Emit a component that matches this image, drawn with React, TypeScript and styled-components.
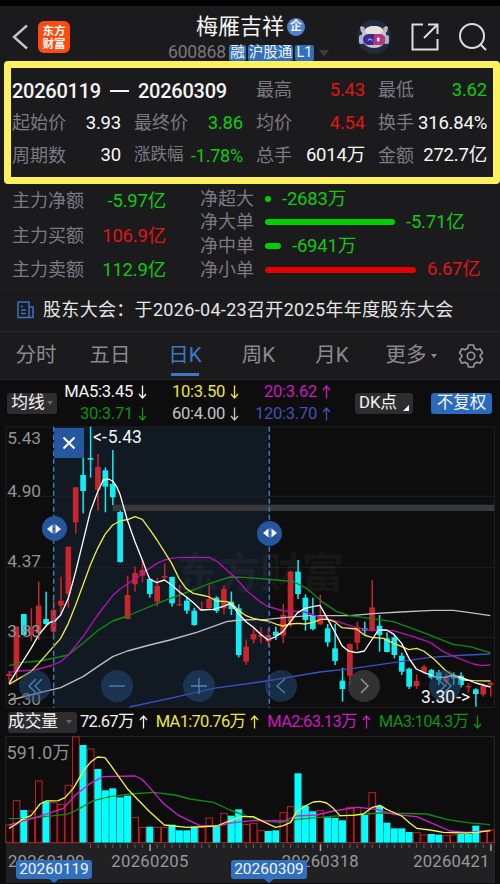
import React from "react";
import styled, { createGlobalStyle } from "styled-components";

const UP = "#e01515";
const DOWN = "#12c812";
const CYAN = "#00ffff";
const RED = "#c9252d";

const Global = createGlobalStyle`
  * { box-sizing: border-box; }
  body { margin: 0; background: #0d0d0d; }
`;

const Screen = styled.div`
  width: 500px;
  height: 884px;
  overflow: hidden;
  display: flex;
  flex-direction: column;
  background: #1b1b1d;
  border-top: 6px solid #000;
  font-family: Roboto, "Noto Sans CJK SC", sans-serif;
  font-size: 18px;
  line-height: 1;
  white-space: nowrap;
  color: #f4f4f4;
`;

/* ---------- header ---------- */
const Header = styled.header`
  height: 55px;
  flex: none;
  display: grid;
  grid-template-columns: 158px 184px 158px;
`;
const HeaderLeft = styled.div`
  display: flex;
  align-items: center;
  padding: 7px 0 0 12px;
  gap: 10px;
`;
const Brand = styled.div`
  width: 32px;
  height: 32px;
  border-radius: 6px;
  background: #fb4b10;
  display: grid;
  place-content: center;
  font: 700 11.5px/13.5px "Noto Sans CJK SC", sans-serif;
  color: #fff;
  text-align: center;
`;
const Titles = styled.div`
  display: flex;
  flex-direction: column;
`;
const Name = styled.div`
  display: flex;
  align-items: center;
  gap: 3px;
  height: 31px;
  padding: 10px 0 0 38px;
  font-size: 22px;
`;
const Seal = styled.span`
  width: 18px;
  height: 18px;
  border-radius: 50%;
  background: #5080d0;
  font-size: 12px;
  font-weight: 700;
  line-height: 17px;
  text-align: center;
`;
const Codes = styled.div`
  display: flex;
  align-items: center;
  height: 24px;
  padding: 8px 0 0 10px;
`;
const Code = styled.span`
  width: 61px;
  font-size: 17.5px;
  color: #77777d;
  letter-spacing: -0.2px;
`;
const Tag = styled.span<{ $w: number }>`
  width: ${(p) => p.$w}px;
  height: 16px;
  margin-right: 2px;
  border-radius: 2px;
  background: #2f6fbd;
  font-size: 14.5px;
  line-height: 15px;
  text-align: center;
`;
const Caret = styled.i<{ $s?: number; $c?: string }>`
  width: 0;
  height: 0;
  border: ${(p) => p.$s ?? 4}px solid transparent;
  border-top: ${(p) => (p.$s ?? 4) * 1.4}px solid ${(p) => p.$c ?? "#66666a"};
  border-bottom: 0;
`;
const CodeCaret = styled(Caret)`
  margin-left: 3px;
`;
const HeaderRight = styled.div`
  display: flex;
  align-items: center;
  gap: 19px;
  padding: 7px 0 0 14px;
`;

/* ---------- range summary ---------- */
const Summary = styled.section`
  margin-left: 4px;
  height: 123px;
  flex: none;
  border: 7px solid #fdf15e;
  border-radius: 4px;
  padding: 6px 6px 0 1px;
  display: grid;
  grid-template-columns: repeat(4, 109px);
  column-gap: 13px;
  grid-auto-rows: 32.7px;
`;
const Cell = styled.div<{ $narrow?: boolean }>`
  display: flex;
  justify-content: space-between;
  align-items: center;
  font-size: ${(p) => (p.$narrow ? 16.5 : 18)}px;
`;
const Period = styled.div`
  grid-column: span 2;
  display: flex;
  align-items: center;
  gap: 9px;
  padding-top: 1px;
  font-size: 20px;
  font-weight: 500;
  letter-spacing: -0.25px;
`;
const Dash = styled.i`
  width: 19px;
  height: 2px;
  background: #f4f4f4;
`;
const Label = styled.span`
  color: #7b7984;
`;
const Value = styled.span<{ $c?: string; $s?: number }>`
  color: ${(p) => p.$c ?? "#f8f8f8"};
  font-size: ${(p) => p.$s ?? 18.5}px;
  letter-spacing: -0.2px;
`;

/* ---------- money flow ---------- */
const Flow = styled.section`
  height: 106px;
  flex: none;
  display: grid;
  grid-template-columns: 154px 1fr;
  column-gap: 34px;
  padding: 0 12px;
  border-bottom: 1px solid #222225;
`;
const Mains = styled.div`
  display: grid;
  grid-auto-rows: 34.5px;
  align-content: start;
`;
const Orders = styled.div`
  display: grid;
  grid-auto-rows: 23.6px;
  align-content: start;
  padding-top: 3px;
`;
const Order = styled.div`
  display: flex;
  align-items: center;
`;
const Bar = styled.i<{ $w: number; $c: string }>`
  width: ${(p) => p.$w}px;
  height: 6px;
  border-radius: 3px;
  margin: 0 11px;
  background: ${(p) => p.$c};
`;

const News = styled.section`
  height: 41px;
  flex: none;
  display: flex;
  align-items: center;
  gap: 9px;
  padding: 0 0 1px 17px;
  font-size: 18px;
  color: #e6e6e8;
  letter-spacing: 0.32px;
`;

const Tabs = styled.nav`
  height: 49px;
  flex: none;
  display: grid;
  grid-template-columns: 72px 76px 74px 73px 74px 84px 36px;
  border-top: 1px solid #252527;
  border-bottom: 1px solid #252527;
`;
const Tab = styled.div<{ $on?: boolean }>`
  display: flex;
  align-items: center;
  justify-content: center;
  gap: 4px;
  font-size: 20.5px;
  color: ${(p) => (p.$on ? "#3c78c8" : "#8a8a8e")};
  background: ${(p) => (p.$on ? "linear-gradient(#3c78c8,#3c78c8) 50% 41px / 28px 3px no-repeat" : "none")};
`;

/* ---------- averages ---------- */
const Averages = styled.section`
  height: 46px;
  flex: none;
  display: flex;
  align-items: center;
  background: #0d0d0d;
  padding: 0 8px 0 7px;
`;
const Chip = styled.div<{ $w: number; $blue?: boolean }>`
  width: ${(p) => p.$w}px;
  height: 21px;
  flex: none;
  border-radius: 3px;
  background: ${(p) => (p.$blue ? "#2a6abb" : "#2d2d2f")};
  display: flex;
  align-items: center;
  justify-content: center;
  gap: 2px;
  font-size: ${(p) => (p.$blue ? 16.5 : 16.7)}px;
`;
const Corner = styled.i`
  align-self: flex-end;
  margin: 0 0 3px 4px;
  border-left: 6px solid transparent;
  border-bottom: 6px solid #fff;
`;
const AverageGrid = styled.div`
  width: 274px;
  display: grid;
  grid-template-columns: 90px 92px 92px;
  grid-auto-rows: 22px;
  margin-right: 24px;
`;
const Reading = styled.div<{ $c: string }>`
  display: flex;
  align-items: center;
  justify-content: flex-end;
  gap: 5px;
  color: ${(p) => p.$c};
  font-size: 16.6px;
  letter-spacing: -0.3px;
`;
const Spacer = styled.i`
  flex: 1;
`;

/* ---------- charts ---------- */
const ChartBox = styled.section<{ $h: number }>`
  position: relative;
  height: ${(p) => p.$h}px;
  flex: none;
  background: #0d0d0d;
  svg { display: block; }
`;
const Round = styled.button<{ $x: number; $y: number; $d: number; $bg: string }>`
  position: absolute;
  left: ${(p) => p.$x - p.$d / 2}px;
  top: ${(p) => p.$y - p.$d / 2}px;
  width: ${(p) => p.$d}px;
  height: ${(p) => p.$d}px;
  border: 0;
  padding: 0;
  border-radius: 50%;
  background: ${(p) => p.$bg};
  display: grid;
  place-items: center;
`;
const Extreme = styled.div<{ $x: number; $y: number }>`
  position: absolute;
  left: ${(p) => p.$x}px;
  top: ${(p) => p.$y}px;
  display: flex;
  align-items: center;
  gap: 1px;
  font-size: 17.5px;
  line-height: 18px;
`;
const Close = styled.button`
  position: absolute;
  left: 54px;
  top: 2px;
  width: 30px;
  height: 30px;
  border: 0;
  padding: 0;
  background: #2657a0;
  display: grid;
  place-items: center;
`;
const VolumeBar = styled.section`
  height: 28px;
  flex: none;
  display: flex;
  align-items: center;
  background: #0d0d0d;
  padding: 0 0 0 8px;
`;
const VolumeReading = styled(Reading)`
  margin-left: 3px;
  margin-right: 5px;
  font-size: 16.5px;
  letter-spacing: -0.7px;
`;
const Flag = styled.div<{ $x: number }>`
  position: absolute;
  left: ${(p) => p.$x}px;
  top: 124px;
  width: 76px;
  height: 19px;
  border-radius: 3px;
  background: #2f70c0;
  font-size: 15.5px;
  line-height: 19px;
  text-align: center;
  &::after {
    content: "";
    position: absolute;
    left: 33px;
    top: 19px;
    border: 5px solid transparent;
    border-top: 4px solid #2f70c0;
    border-bottom: 0;
  }
`;

/* Candle: direction, high, body top, body bottom, low, in thirds of a pixel */
type Candle = [0 | 1, number, number, number, number];
const candles: Candle[] = [
  [1, 738, 747, 753, 768], [1, 605, 605, 738, 765], [0, 567, 567, 630, 630], [1, 550, 608, 625, 648],
  [1, 470, 542, 625, 645], [0, 500, 582, 597, 605], [1, 520, 555, 620, 630], [1, 455, 527, 542, 570],
  [1, 365, 365, 507, 548], [1, 187, 187, 292, 325], [0, 65, 150, 198, 265], [0, 5, 99, 104, 158],
  [1, 87, 126, 195, 257], [0, 127, 136, 185, 262], [0, 75, 177, 217, 240], [0, 258, 261, 411, 413],
  [1, 452, 510, 582, 582], [1, 425, 444, 478, 500], [1, 405, 435, 452, 472], [0, 460, 462, 507, 518],
  [1, 458, 483, 530, 545], [1, 415, 453, 458, 462], [0, 455, 456, 535, 545], [1, 480, 537, 541, 543],
  [0, 515, 527, 557, 567], [0, 548, 557, 600, 602], [1, 530, 552, 556, 558], [1, 480, 522, 550, 552],
  [0, 514, 518, 558, 564], [1, 482, 492, 550, 568], [0, 500, 530, 552, 570], [0, 538, 550, 690, 697],
  [1, 643, 665, 710, 720], [1, 605, 627, 643, 655], [1, 607, 630, 635, 655], [1, 610, 630, 650, 665],
  [0, 605, 620, 632, 645], [1, 537, 570, 632, 655], [1, 438, 440, 590, 607], [0, 405, 440, 507, 522],
  [0, 508, 518, 585, 617], [0, 518, 573, 612, 616], [1, 510, 572, 598, 600], [0, 597, 610, 652, 665],
  [0, 597, 670, 708, 720], [0, 728, 767, 792, 830], [1, 655, 657, 752, 780], [1, 590, 607, 653, 675],
  [0, 590, 610, 617, 628], [1, 466, 547, 618, 620], [0, 570, 602, 630, 680], [0, 622, 640, 681, 682],
  [0, 630, 637, 690, 700], [0, 683, 692, 740, 750], [0, 728, 731, 785, 792], [1, 748, 768, 783, 792],
  [1, 720, 725, 742, 746], [0, 732, 735, 758, 763], [0, 735, 742, 765, 780], [1, 745, 755, 770, 785],
  [0, 742, 753, 760, 780], [0, 742, 752, 780, 787], [1, 775, 783, 787, 803], [0, 790, 793, 807, 845],
  [1, 775, 783, 808, 815], [1, 770, 774, 779, 815],
];
/* Volume: direction, top of the bar */
const volumes: [0 | 1, number][] = [
  [1, 375], [1, 302], [0, 330], [1, 333], [1, 243], [0, 305], [1, 308], [1, 313], [1, 256], [1, 111],
  [0, 135], [1, 147], [0, 207], [0, 271], [0, 265], [0, 292], [0, 287], [1, 352], [1, 382], [0, 380],
  [1, 382], [1, 382], [0, 374], [0, 391], [0, 391], [0, 380], [1, 382], [1, 354], [0, 378], [1, 340],
  [0, 347], [0, 328], [1, 373], [1, 370], [1, 392], [0, 393], [0, 391], [1, 338], [1, 320], [0, 220],
  [0, 317], [0, 334], [1, 332], [0, 352], [0, 354], [0, 361], [1, 322], [1, 322], [0, 345], [1, 278],
  [0, 318], [0, 368], [0, 385], [0, 385], [0, 396], [1, 398], [1, 405], [0, 402], [0, 404], [1, 407],
  [1, 405], [0, 402], [0, 402], [0, 377], [1, 392], [1, 390],
];
const cx = (i: number) => 27 + i * 22.23;

const priceLines: [string, string][] = [
  ["#3f4fc8", "388,846 510,820 640,790 800,768 960,741 1060,730 1180,713 1290,697 1400,690 1471,687"],
  ["#bfbfc4", "27,827 90,810 182,788 249,755 293,725 338,695 382,678 449,660 510,645 590,622 680,590 720,585 800,583 860,577 930,572 1050,572 1120,566 1200,561 1300,556 1360,556 1410,563 1471,572"],
  ["#128a14", "27,722 60,713 120,708 205,690 249,655 293,617 338,588 382,573 449,545 493,527 580,495 630,475 690,456 730,457 830,465 880,470 920,490 970,533 1010,560 1050,572 1180,590 1270,623 1360,658 1410,665 1471,683"],
  ["#b413b4", "27,742 60,738 105,735 160,720 182,710 205,690 249,635 293,570 338,512 360,492 405,462 449,430 471,415 493,405 515,400 540,397 628,397 650,408 680,435 710,462 740,497 780,530 800,543 850,558 910,560 940,570 980,580 1020,592 1060,605 1100,615 1180,617 1240,635 1290,652 1330,680 1370,698 1420,717 1445,722 1471,720"],
  ["#f0ea45", "27,778 93,740 116,715 182,640 205,595 227,540 249,480 271,420 293,370 315,328 338,300 360,288 385,283 405,275 427,283 449,313 471,345 493,380 515,415 537,460 558,490 580,505 603,510 625,515 650,528 680,530 695,535 715,555 738,572 760,580 782,585 804,588 830,598 849,603 871,597 893,595 915,597 940,592 962,583 982,583 1004,590 1026,608 1070,612 1093,630 1115,637 1150,640 1182,655 1205,665 1227,674 1250,670 1271,678 1305,705 1335,735 1365,755 1390,765 1420,767 1471,768"],
  ["#ffffff", "27,775 49,740 71,705 93,670 116,630 138,603 150,592 165,588 182,570 205,520 227,440 249,350 271,260 293,200 310,165 325,162 338,168 350,185 360,208 382,285 405,350 427,405 440,440 449,462 470,473 493,465 515,480 538,500 560,517 582,535 603,555 640,553 668,545 690,536 700,545 717,568 738,590 760,607 782,628 804,645 827,635 849,620 871,590 893,563 915,550 938,545 960,541 982,580 1004,620 1026,662 1045,678 1070,683 1093,678 1115,645 1135,615 1160,615 1182,628 1205,655 1227,700 1249,732 1271,742 1310,757 1335,757 1360,750 1382,757 1404,765 1427,774 1449,780 1471,786"],
];
const volumeLines: [string, string][] = [
  ["#128a14", "27,356 80,355 200,343 227,332 280,302 330,290 390,282 460,277 525,285 570,297 640,307 690,330 750,352 790,362 840,368 890,358 950,353 1050,345 1140,339 1280,342 1340,358 1400,368 1471,374"],
  ["#d020d0", "27,375 116,350 190,325 227,285 271,250 310,230 405,228 425,237 449,263 493,313 537,347 600,377 650,378 700,368 760,362 850,363 890,348 950,345 1000,333 1050,325 1075,322 1130,328 1180,343 1250,350 1290,367 1350,393 1400,397 1471,392"],
  ["#f5f04a", "27,385 49,372 71,355 93,347 105,332 120,312 138,303 175,302 195,293 220,265 249,215 271,187 293,171 315,173 335,200 382,266 405,290 449,335 493,375 560,382 650,378 690,362 725,350 760,350 790,365 827,382 850,377 872,367 890,335 915,318 940,306 960,304 980,309 1000,325 1020,347 1060,346 1090,342 1115,323 1140,316 1160,328 1205,348 1230,370 1250,385 1290,390 1330,397 1400,399 1430,397 1471,392"],
];

const Arrow = ({ up }: { up?: boolean }) => (
  <svg width="9" height="14" viewBox="0 0 9 14" fill="none" stroke="currentColor" strokeWidth="1.3">
    <path d={up ? "M4.5 13.5V1M1 5L4.5 1L8 5" : "M4.5 .5V13M1 9L4.5 13L8 9"} />
  </svg>
);

const Robot = () => (
  <svg width="36" height="36" viewBox="0 0 36 36">
    <circle cx="18" cy="18" r="17" fill="#202a40" />
    <path d="M4 8q2-2 5 1l-2 5-2-1zM32 8q-2-2-5 1l2 5 2-1z" fill="#b9bcc8" />
    <ellipse cx="18" cy="18" rx="12.5" ry="11" fill="#c6c4cc" />
    <ellipse cx="18" cy="11.500" rx="9" ry="4.500" fill="#e6dfdc" />
    <rect x="3" y="16" width="5" height="9" rx="2" fill="#aeb2c8" />
    <rect x="28" y="16" width="5" height="9" rx="2" fill="#aeb2c8" />
    <rect x="7" y="15" width="22" height="11" rx="5.5" fill="#3d2a91" />
    <path d="M18 15h5.500a5.500 5.500 0 010 11H17z" fill="#b43583" />
    <path d="M12 21.500q2-3 4 0" stroke="#79a2ff" strokeWidth="1.5" fill="none" />
    <rect x="21" y="18.500" width="2.500" height="4" rx="1" fill="#fff" />
  </svg>
);

const Gear = () => (
  <svg width="26" height="26" viewBox="0 0 26 26" fill="none" stroke="#99999d" strokeWidth="1.6" strokeLinejoin="round">
    <path d="M10.500 2h5l.8 3.200 2.700 1.500 3.200-.9 2.300 4.200-2.300 2.300v1.400l2.300 2.300-2.300 4.200-3.200-.9-2.700 1.500-.8 3.200h-5l-.8-3.200L7 19.300l-3.200.9L1.500 16l2.300-2.300v-1.400L1.500 10l2.300-4.200 3.200.9 2.700-1.500z" />
    <circle cx="13" cy="13" r="3.700" />
  </svg>
);

const Handle = () => (
  <svg width="16" height="10" viewBox="0 0 16 10" fill="#fff">
    <path d="M6.500 0.500v9L1 5zM9.500 0.500v9L15 5z" />
    <path d="M8 0v10" stroke="#5d9be0" strokeWidth="1" strokeDasharray="4 2" />
  </svg>
);

const Glyph = ({ d, c = "#4c86b8", w = 1.3 }: { d: string; c?: string; w?: number }) => (
  <svg width="20" height="20" viewBox="0 0 20 20" fill="none" stroke={c} strokeWidth={w}>
    <path d={d} />
  </svg>
);

const PriceChart = () => (
  <ChartBox $h={282}>
    <svg width="500" height="282" viewBox="0 3 1500 846">
      <rect x="160" y="6" width="648" height="842" fill="#111922" />
      <g stroke="#1f2124" strokeWidth="3" fill="none">
        <path d="M18 6H1483V847H18zM18 214H1483M18 427H1483M18 637H1483" />
      </g>
      <text x="530" y="490" fontSize="126" fontWeight="700" fill="#fff" opacity=".04" letterSpacing="-1">东方财富</text>
      <rect x="338" y="239" width="1145" height="19" fill="#38393b" />
      {candles.map(([up, h, t, b, l], i) => (
        <g key={i} fill={up ? RED : "#10eef5"}>
          <rect x={cx(i) - 2} y={h} width="4.500" height={Math.max(1, l - h)} />
          <rect x={cx(i) - 8.5} y={t} width="17" height={b - t} />
        </g>
      ))}
      {priceLines.map(([c, p]) => (
        <polyline key={c} points={p} fill="none" stroke={c} strokeWidth="4" strokeLinejoin="round" />
      ))}
      <g stroke="#4479b8" strokeWidth="4.500" strokeDasharray="15 9">
        <path d="M161 5V848M808 5V848" />
      </g>
      <g fill="#929296" fontSize="52">
        <text x="22" y="57">5.43</text>
        <text x="22" y="216">4.90</text>
        <text x="22" y="426">4.37</text>
        <text x="22" y="637">3.83</text>
        <text x="22" y="841">3.30</text>
      </g>
    </svg>
    <Close aria-label="close">
      <Glyph c="#fff" w={2} d="M4.500 4.500l11 11M15.500 4.500l-11 11" />
    </Close>
    <Round $x={54} $y={102.5} $d={25} $bg="#25569d"><Handle /></Round>
    <Round $x={269.500} $y={107} $d={25} $bg="#25569d"><Handle /></Round>
    <Round $x={35} $y={260} $d={32} $bg="rgba(35,80,130,.5)"><Glyph d="M11 3L4 10l7 7M17 3l-7 7 7 7" /></Round>
    <Round $x={117} $y={260} $d={32} $bg="rgba(35,80,130,.5)"><Glyph d="M2 10h16" /></Round>
    <Round $x={199} $y={260} $d={32} $bg="rgba(35,80,130,.5)"><Glyph d="M2 10h16M10 2v16" /></Round>
    <Round $x={281} $y={260} $d={32} $bg="rgba(35,80,130,.5)"><Glyph d="M14 3L6 10l8 7" /></Round>
    <Round $x={363.500} $y={260} $d={32} $bg="rgba(70,70,72,.65)"><Glyph c="#a0a0a0" d="M7 3l7 7-7 7" /></Round>
    <Round $x={445} $y={260} $d={32} $bg="rgba(35,80,130,.5)"><Glyph d="M3 3l7 7-7 7M9 3l7 7-7 7" /></Round>
    <Extreme $x={93} $y={2}>&lt;-<span>5.43</span></Extreme>
    <Extreme $x={421} $y={262}><span>3.30</span>-&gt;</Extreme>
  </ChartBox>
);

const VolumeChart = () => (
  <ChartBox $h={148}>
    <svg width="500" height="148" viewBox="0 108 1500 444">
      <rect x="18" y="428" width="1465" height="121" fill="#212123" />
      <path d="M18 428V109H1483V549" fill="none" stroke="#29292c" strokeWidth="3" />
      {volumes.map(([up, t], i) =>
        up ? (
          <rect key={i} x={cx(i) - 9.5} y={t} width="20" height={428 - t} fill="#170607" stroke="#b5272a" strokeWidth="3" />
        ) : (
          <rect key={i} x={cx(i) - 10.5} y={t} width="21" height={428 - t} fill={CYAN} />
        ),
      )}
      <text x="20" y="177" fontSize="53" fill="#929296" textLength="190">591.0万</text>
      {volumeLines.map(([c, p]) => (
        <polyline key={c} points={p} fill="none" stroke={c} strokeWidth="4" strokeLinejoin="round" />
      ))}
      {volumes.map((_, i) => {
        const major = i === 19 || i === 42 || i === 65;
        return i > 10 ? (
          <rect key={i} x={cx(i) - 1.5} y="433" width={major ? 4.5 : 3} height={major ? 20 : 11} fill={major ? "#a5a5a8" : "#606064"} />
        ) : null;
      })}
      <g fill="#98989c" fontSize="50">
        <text x="24" y="500" textLength="230">20260109</text>
        <text x="334" y="500" textLength="231">20260205</text>
        <text x="845" y="500" textLength="231">20260318</text>
        <text x="1240" y="500" textLength="228">20260421</text>
      </g>
    </svg>
    <Flag $x={16}>20260119</Flag>
    <Flag $x={231}>20260309</Flag>
  </ChartBox>
);

const summary: [string, string, string?][] = [
  ["最高", "5.43", UP], ["最低", "3.62", DOWN],
  ["起始价", "3.93"], ["最终价", "3.86", DOWN], ["均价", "4.54", UP], ["换手", "316.84%"],
  ["周期数", "30"], ["涨跌幅", "-1.78%", DOWN], ["总手", "6014万"], ["金额", "272.7亿"],
];
const mains: [string, string, string][] = [
  ["主力净额", "-5.97亿", DOWN], ["主力买额", "106.9亿", UP], ["主力卖额", "112.9亿", DOWN],
];
const orders: [string, number, string, string][] = [
  ["净超大", 6, "-2683万", DOWN], ["净大单", 130, "-5.71亿", DOWN],
  ["净中单", 16, "-6941万", DOWN], ["净小单", 151, "6.67亿", UP],
];
const averages: [string, string, boolean][] = [
  ["MA5:3.45", "#f4f4f4", false], ["10:3.50", "#ece63c", false], ["20:3.62", "#cc18c0", true],
  ["30:3.71", "#128f16", false], ["60:4.00", "#c4c4c8", false], ["120:3.70", "#4550b8", true],
];

export default function App() {
  return (
    <Screen>
      <Global />
      <Header>
        <HeaderLeft>
          <svg width="16" height="26" viewBox="0 0 16 26" fill="none" stroke="#c4c4c6" strokeWidth="2.400">
            <path d="M15 1.500L2 13l13 11.500" />
          </svg>
          <Brand>东方<br />财富</Brand>
        </HeaderLeft>
        <Titles>
          <Name>梅雁吉祥<Seal>企</Seal></Name>
          <Codes>
            <Code>600868</Code>
            <Tag $w={17}>融</Tag>
            <Tag $w={45}>沪股通</Tag>
            <Tag $w={19}>L1</Tag>
            <CodeCaret $s={5} $c="#3c3c40" />
          </Codes>
        </Titles>
        <HeaderRight>
          <Robot />
          <svg width="28" height="28" viewBox="0 0 28 28" fill="none" stroke="#dedee0" strokeWidth="2">
            <path d="M12 1.500H1.500v25h25V16M17 1.500h9.500V11M26.500 1.500L13 15" />
          </svg>
          <svg width="30" height="30" viewBox="0 0 30 30" fill="none" stroke="#dedee0" strokeWidth="2">
            <circle cx="14" cy="14" r="12" />
            <path d="M22.500 22.500L28 28" />
          </svg>
        </HeaderRight>
      </Header>

      <Summary>
        <Period>20260119<Dash />20260309</Period>
        {summary.map(([l, v, c]) => (
          <Cell key={l} $narrow={l === "涨跌幅"}>
            <Label>{l}</Label>
            <Value $c={c} $s={l === "涨跌幅" ? 18 : undefined}>{v}</Value>
          </Cell>
        ))}
      </Summary>

      <Flow>
        <Mains>
          {mains.map(([l, v, c]) => (
            <Cell key={l}><Label>{l}</Label><Value $c={c}>{v}</Value></Cell>
          ))}
        </Mains>
        <Orders>
          {orders.map(([l, w, v, c]) => (
            <Order key={l}>
              <Label>{l}</Label>
              <Bar $w={w} $c={c === UP ? "#e60000" : "#00d200"} />
              <Value $c={c}>{v}</Value>
            </Order>
          ))}
        </Orders>
      </Flow>

      <News>
        <svg width="17" height="18" viewBox="0 0 17 18" fill="none" stroke="#3f73c4" strokeWidth="1.500">
          <path d="M1 1h11v15.500H1zM12 6h4v10.500h-4M4 5.500h2M4 9h5M4 12.500h5" />
        </svg>
        股东大会：于2026-04-23召开2025年年度股东大会
      </News>

      <Tabs>
        <Tab>分时</Tab>
        <Tab>五日</Tab>
        <Tab $on>日K</Tab>
        <Tab>周K</Tab>
        <Tab>月K</Tab>
        <Tab>更多<Caret $s={3.500} $c="#8a8a8e" /></Tab>
        <Tab><Gear /></Tab>
      </Tabs>

      <Averages>
        <Chip $w={50}>均线<Caret $s={3} /></Chip>
        <AverageGrid>
          {averages.map(([t, c, up]) => (
            <Reading key={t} $c={c}>{t}<Arrow up={up} /></Reading>
          ))}
        </AverageGrid>
        <Chip $w={58}>DK点<Corner /></Chip>
        <Spacer />
        <Chip $w={61} $blue>不复权</Chip>
      </Averages>

      <PriceChart />

      <VolumeBar>
        <Chip $w={69}>成交量<Spacer /><Caret $s={3} /><Spacer /></Chip>
        <VolumeReading $c="#f4f4f4">72.67万<Arrow up /></VolumeReading>
        <VolumeReading $c="#ece63c">MA1:70.76万<Arrow up /></VolumeReading>
        <VolumeReading $c="#cc18c0">MA2:63.13万<Arrow up /></VolumeReading>
        <VolumeReading $c="#128f16">MA3:104.3万<Arrow /></VolumeReading>
      </VolumeBar>

      <VolumeChart />
    </Screen>
  );
}
